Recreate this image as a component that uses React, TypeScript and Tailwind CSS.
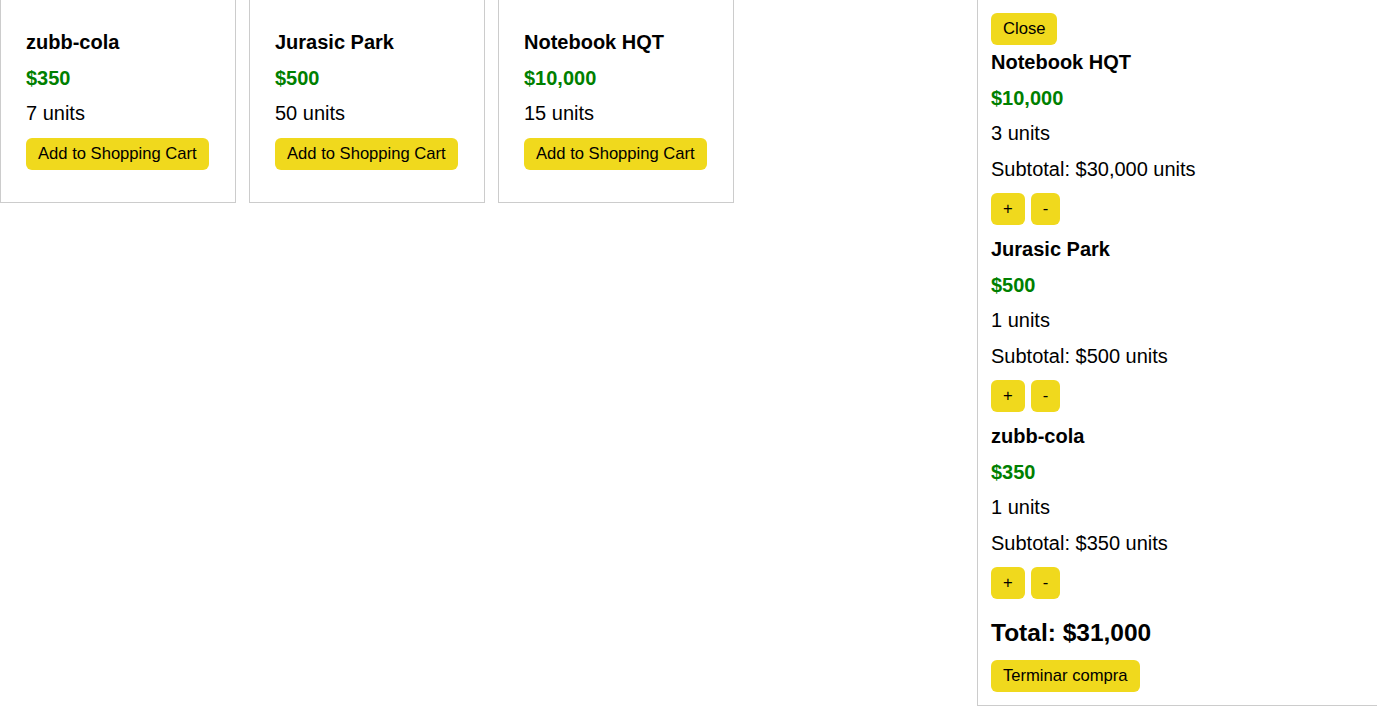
const products = [
  { name: "zubb-cola", price: "$350", stock: 7 },
  { name: "Jurasic Park", price: "$500", stock: 50 },
  { name: "Notebook HQT", price: "$10,000", stock: 15 },
];

const cart = [
  { name: "Notebook HQT", price: "$10,000", qty: 3, subtotal: "$30,000" },
  { name: "Jurasic Park", price: "$500", qty: 1, subtotal: "$500" },
  { name: "zubb-cola", price: "$350", qty: 1, subtotal: "$350" },
];

const btn =
  "rounded-md bg-[#f0d91d] px-3 h-8 text-[16.6px] leading-none text-black";

export default function App() {
  return (
    <div className="flex h-[707px] justify-between font-['Liberation_Sans',Arial,sans-serif] text-black">
      {/* Product list */}
      <div className="flex items-start gap-[13px]">
        {products.map((p) => (
          <div
            key={p.name}
            className="flex w-[236px] flex-col border-x border-b border-[#cccccc] px-[25px] pt-6 pb-8"
          >
            <h3 className="h-9 text-[20px] leading-9 font-bold">{p.name}</h3>
            <p className="h-9 text-[20px] leading-9 font-bold text-[#008000]">
              {p.price}
            </p>
            <p className="h-[35px] text-[20px] leading-[35px]">
              {p.stock} units
            </p>
            <div className="mt-[7px]">
              <button className={btn}>Add to Shopping Cart</button>
            </div>
          </div>
        ))}
      </div>

      {/* Shopping cart */}
      <div className="flex h-[706px] w-[400px] flex-col items-start border-l border-b border-[#cccccc] px-[13px] pt-[13px]">
        <button className={btn}>Close</button>
        {cart.map((item, i) => (
          <div key={item.name} className={i === 0 ? "" : "mt-[7px]"}>
            <h3 className="h-[35px] text-[20px] leading-[35px] font-bold">
              {item.name}
            </h3>
            <p className="h-9 text-[20px] leading-9 font-bold text-[#008000]">
              {item.price}
            </p>
            <p className="h-[35px] text-[20px] leading-[35px]">
              {item.qty} units
            </p>
            <p className="h-9 text-[20px] leading-9">
              Subtotal: {item.subtotal} units
            </p>
            <div className="mt-1.5 flex gap-1.5">
              <button className={btn}>+</button>
              <button className={btn}>-</button>
            </div>
          </div>
        ))}
        <h2 className="mt-[18px] h-8 text-[24.5px] leading-8 font-bold">
          Total: $31,000
        </h2>
        <button className={`${btn} mt-[11px]`}>Terminar compra</button>
      </div>
    </div>
  );
}
